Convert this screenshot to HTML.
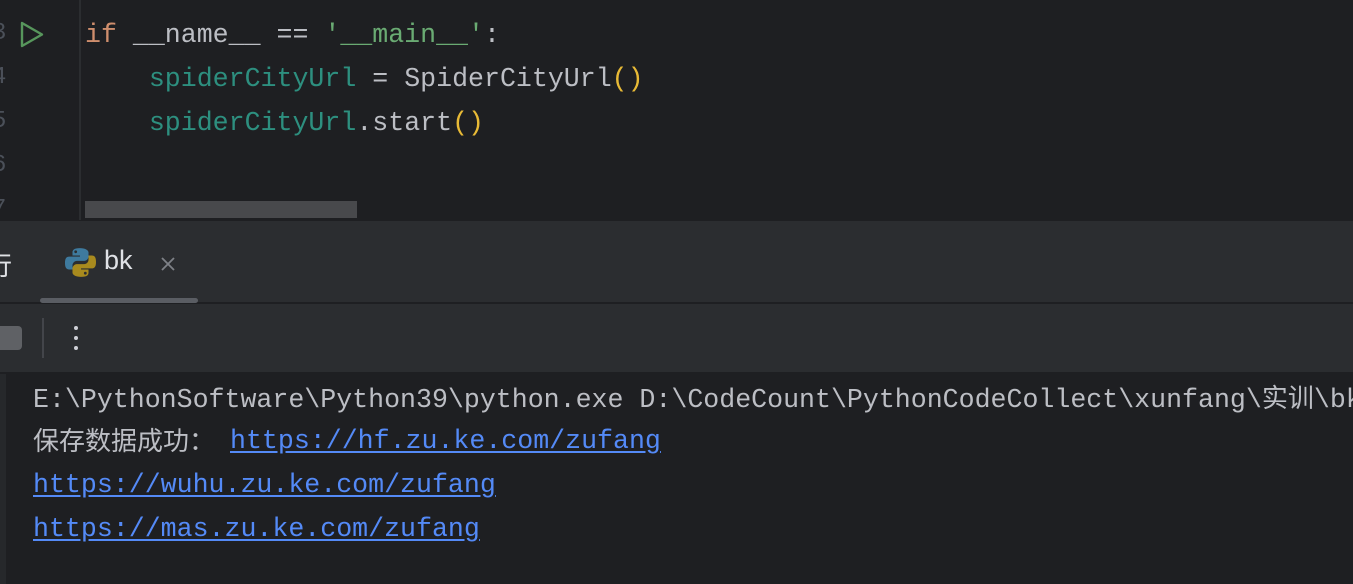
<!DOCTYPE html>
<html><head><meta charset="utf-8"><style>
body{margin:0;width:1353px;height:584px;overflow:hidden;background:#1e1f22;position:relative;font-family:"Liberation Mono","Noto Sans CJK SC",monospace;}
.a{position:absolute;white-space:pre;font-size:26.6px;line-height:30px;}
.g{color:#bcbec4}.k{color:#cf8e6d}.s{color:#6aab73}.v{color:#2d8f7f}.p{color:#e8ba36}
.l{color:#548af7;text-decoration:underline;text-underline-offset:3px}
.cj{font-family:"Noto Sans CJK SC",sans-serif;font-size:26px;color:#bcbec4}
</style></head><body>
<div style="position:absolute;left:79px;top:0;width:2px;height:220px;background:#2b2d30"></div>
<div style="position:absolute;left:0;top:0;width:10px;height:220px;color:#4b5059;font:24px 'Liberation Mono';">
<div style="position:absolute;left:-8px;top:20px">3</div><div style="position:absolute;left:-8px;top:64px">4</div><div style="position:absolute;left:-8px;top:108px">5</div><div style="position:absolute;left:-8px;top:152px">6</div><div style="position:absolute;left:-8px;top:196px">7</div></div>
<svg style="position:absolute;left:19px;top:21px" width="26" height="27"><path d="M3 2 L23 13.5 L3 25 Z" fill="none" stroke="#57965c" stroke-width="2.4" stroke-linejoin="round"/></svg>
<div class="a" style="left:85px;top:20px"><span class="k">if</span><span class="g"> __name__ == </span><span class="s">'__main__'</span><span class="g">:</span></div>
<div class="a" style="left:85px;top:64px"><span class="g">    </span><span class="v">spiderCityUrl</span><span class="g"> = SpiderCityUrl</span><span class="p">()</span></div>
<div class="a" style="left:85px;top:108px"><span class="g">    </span><span class="v">spiderCityUrl</span><span class="g">.start</span><span class="p">()</span></div>
<div style="position:absolute;left:85px;top:201px;width:272px;height:17px;background:#48494c"></div>
<div style="position:absolute;left:0;top:221px;width:1353px;height:151px;background:#2b2d30"></div>
<div style="position:absolute;left:0;top:302px;width:1353px;height:2px;background:#1e1f22"></div>
<div style="position:absolute;left:40px;top:298px;width:158px;height:5px;border-radius:3px;background:#5a5d63"></div>
<div style="position:absolute;left:-14px;top:246px;color:#dfe1e5;font:26px 'Noto Sans CJK SC',sans-serif">行</div>
<svg style="position:absolute;left:65px;top:247px" width="31" height="31" viewBox="0 0 29 29"><path d="M14 1c-6 0-7 2-7 4v3h7v1H4c-3 0-4 2-4 6s1 6 4 6h3v-4c0-2 2-4 4-4h7c2 0 4-2 4-4V5c0-2-3-4-8-4z" fill="#3e7a9e"/><path d="M15 28c6 0 7-2 7-4v-3h-7v-1h10c3 0 4-2 4-6s-1-6-4-6h-3v4c0 2-2 4-4 4h-7c-2 0-4 2-4 4v4c0 2 3 4 8 4z" fill="#a88a1e"/><circle cx="10" cy="4.5" r="1.3" fill="#2b2d30"/><circle cx="19" cy="24.5" r="1.3" fill="#2b2d30"/></svg>
<div style="position:absolute;left:104px;top:245px;color:#dfe1e5;font:27px 'Liberation Sans',sans-serif">bk</div>
<svg style="position:absolute;left:160px;top:256px" width="16" height="16"><path d="M2 2L14 14M14 2L2 14" stroke="#7e8187" stroke-width="1.8"/></svg>
<div style="position:absolute;left:-6px;top:326px;width:28px;height:24px;border-radius:4px;background:#5f6165"></div>
<div style="position:absolute;left:42px;top:318px;width:2px;height:40px;background:#43454a"></div>
<div style="position:absolute;left:74px;top:326px;width:4px;height:4px;border-radius:2px;background:#ced0d6;box-shadow:0 10px 0 #ced0d6,0 20px 0 #ced0d6"></div>
<div style="position:absolute;left:0;top:374px;width:6px;height:210px;background:#26282b"></div>
<div class="a g" style="left:33px;top:382px">E:\PythonSoftware\Python39\python.exe D:\CodeCount\PythonCodeCollect\xunfang\<span class="cj">实训</span>\bk</div>
<div class="a cj" style="left:33px;top:425px">保存数据成功：</div>
<div class="a l" style="left:230px;top:426px">https://hf.zu.ke.com/zufang</div>
<div class="a l" style="left:33px;top:470px">https://wuhu.zu.ke.com/zufang</div>
<div class="a l" style="left:33px;top:514px">https://mas.zu.ke.com/zufang</div>
</body></html>
